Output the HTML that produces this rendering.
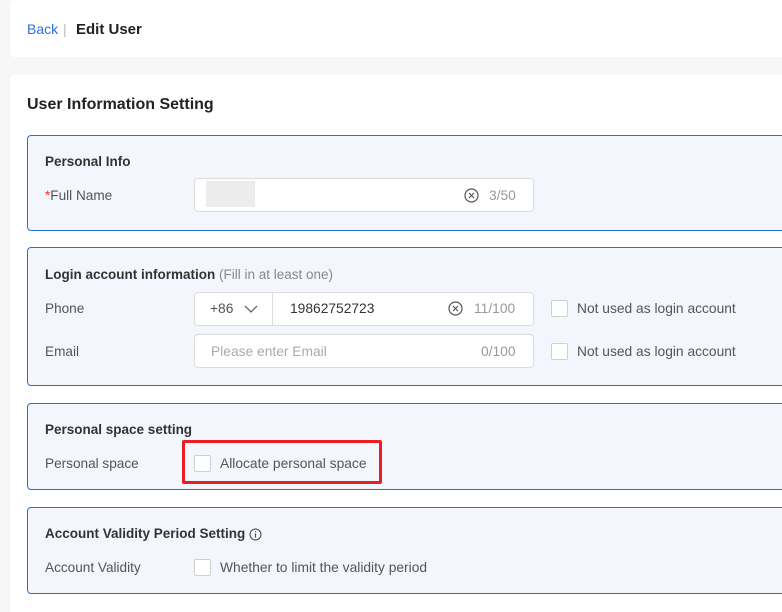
<!DOCTYPE html>
<html><head><meta charset="utf-8"><style>
*{box-sizing:border-box;margin:0;padding:0}
html,body{width:782px;height:612px;overflow:hidden}
body{background:#f7f7f7;font-family:"Liberation Sans",sans-serif;position:relative;color:#333}
.a{position:absolute}
.card{position:absolute;background:#fff;border-radius:4px}
.sec{position:absolute;left:27px;width:800px;background:#f3f6fd;border:1px solid #2d6bd6;border-radius:4px}
.h{font-size:13.5px;font-weight:bold;color:#333}
.lbl{font-size:13.6px;color:#555}
.inp{position:absolute;background:#fff;border:1px solid #dcdcdc;border-radius:4px}
.cb{position:absolute;width:17px;height:17px;background:#fff;border:1px solid #d0d0d0;border-radius:2px}
.t{font-size:13.8px;color:#555;position:absolute}
.g{color:#999}
</style></head><body>
<div class="card" style="left:10px;top:0;width:780px;height:57px"></div>
<div class="a" style="left:27px;top:21px;font-size:14px;color:#2b6fe0">Back</div>
<div class="a" style="left:63px;top:21px;font-size:14px;color:#bbb">|</div>
<div class="a" style="left:76px;top:21px;font-size:15px;font-weight:bold;color:#222">Edit User</div>

<div class="card" style="left:10px;top:75px;width:780px;height:540px"></div>
<div class="a" style="left:27px;top:96px;font-size:16px;font-weight:bold;color:#222">User Information Setting</div>

<div class="sec" style="top:135px;height:96px"></div>
<div class="a h" style="left:45px;top:154px">Personal Info</div>
<div class="a lbl" style="left:45px;top:188px"><span style="color:#e33">*</span>Full Name</div>
<div class="inp" style="left:194px;top:178px;width:340px;height:34px"></div>
<div class="a" style="left:206px;top:181px;width:49px;height:26px;background:#ececec"></div>
<svg class="a" style="left:464px;top:188px" width="15" height="15" viewBox="0 0 15 15"><circle cx="7.5" cy="7.5" r="6.5" fill="none" stroke="#555" stroke-width="1.2"/><path d="M5 5L10 10M10 5L5 10" stroke="#555" stroke-width="1.2"/></svg>
<div class="t g" style="left:489px;top:188px">3/50</div>

<div class="sec" style="top:247px;height:139px"></div>
<div class="a h" style="left:45px;top:267px">Login account information <span style="font-weight:normal;color:#888">(Fill in at least one)</span></div>
<div class="a lbl" style="left:45px;top:301px">Phone</div>
<div class="inp" style="left:194px;top:292px;width:340px;height:34px"></div>
<div class="a" style="left:272px;top:293px;width:1px;height:32px;background:#dcdcdc"></div>
<div class="t" style="left:210px;top:301px">+86</div>
<svg class="a" style="left:244px;top:304px" width="14" height="10" viewBox="0 0 14 10"><path d="M1 2L7 8L13 2" fill="none" stroke="#666" stroke-width="1.3"/></svg>
<div class="t" style="left:290px;top:301px;color:#333">19862752723</div>
<svg class="a" style="left:448px;top:301px" width="15" height="15" viewBox="0 0 15 15"><circle cx="7.5" cy="7.5" r="6.5" fill="none" stroke="#555" stroke-width="1.2"/><path d="M5 5L10 10M10 5L5 10" stroke="#555" stroke-width="1.2"/></svg>
<div class="t g" style="left:474px;top:301px">11/100</div>
<div class="cb" style="left:551px;top:300px"></div>
<div class="t" style="left:577px;top:301px">Not used as login account</div>
<div class="a lbl" style="left:45px;top:344px">Email</div>
<div class="inp" style="left:194px;top:334px;width:340px;height:34px"></div>
<div class="t" style="left:211px;top:344px;color:#aaa">Please enter Email</div>
<div class="t g" style="left:481px;top:344px">0/100</div>
<div class="cb" style="left:551px;top:343px"></div>
<div class="t" style="left:577px;top:344px">Not used as login account</div>

<div class="sec" style="top:403px;height:87px"></div>
<div class="a h" style="left:45px;top:422px">Personal space setting</div>
<div class="a lbl" style="left:45px;top:456px">Personal space</div>
<div class="a" style="left:182px;top:440px;width:200px;height:44px;border:3px solid #ec1c24;border-radius:2px"></div>
<div class="cb" style="left:194px;top:455px"></div>
<div class="t" style="left:220px;top:456px">Allocate personal space</div>

<div class="sec" style="top:507px;height:87px"></div>
<div class="a h" style="left:45px;top:526px">Account Validity Period Setting</div>
<svg class="a" style="left:249px;top:528px" width="13" height="13" viewBox="0 0 13 13"><circle cx="6.5" cy="6.5" r="5.5" fill="none" stroke="#444" stroke-width="1"/><path d="M6.5 5.5V9.5M6.5 3.3V4.3" stroke="#444" stroke-width="1.1"/></svg>
<div class="a lbl" style="left:45px;top:560px">Account Validity</div>
<div class="cb" style="left:194px;top:559px"></div>
<div class="t" style="left:220px;top:560px">Whether to limit the validity period</div>
</body></html>
